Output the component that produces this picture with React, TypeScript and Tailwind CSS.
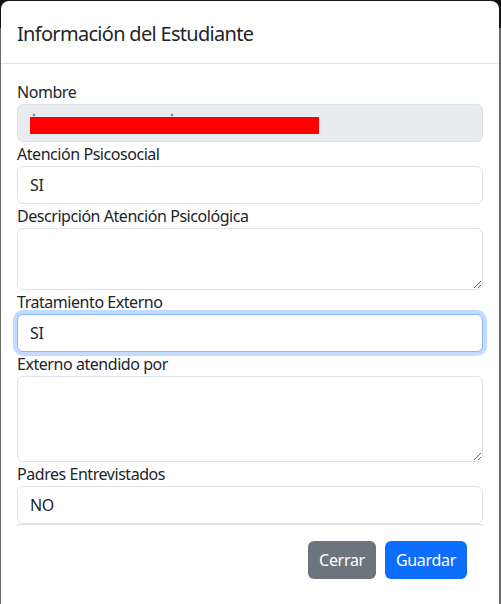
import React from "react";

const font = { fontFamily: '"Segoe UI", "Noto Sans", "Open Sans", sans-serif' };

function Label({ children }: { children: React.ReactNode }) {
  return (
    <label className="block h-[24px] text-[16px] leading-[24px] tracking-[-0.45px] text-[#212529]">{children}</label>
  );
}

function Input({ value, focused, disabled }: { value: string; focused?: boolean; disabled?: boolean }) {
  const base =
    "block w-full h-[38px] rounded-[6px] px-[12px] text-[16px] leading-[24px] tracking-[-0.3px] text-[#212529] outline-none border";
  const cls = focused
    ? `${base} border-[#86b7fe] bg-white shadow-[0_0_0_4px_rgba(13,110,253,0.25)]`
    : disabled
    ? `${base} border-[#dee2e6] bg-[#e9ecef]`
    : `${base} border-[#dee2e6] bg-white`;
  return <input className={cls} style={font} defaultValue={value} readOnly />;
}

function TextArea({ h }: { h: string }) {
  return (
    <textarea
      className={`block w-full ${h} rounded-[6px] border border-[#dee2e6] bg-white px-[12px] py-[6px] text-[16px] leading-[24px] text-[#212529] outline-none resize-y`}
      style={font}
      defaultValue=""
    />
  );
}

export default function App() {
  return (
    <div
      className="w-[501px] h-[604px] overflow-hidden pt-[1px] pl-[1px] bg-[linear-gradient(to_bottom,#141414_28px,#6b6b6b_28px)]"
      style={font}
    >
      <div className="w-[498px] h-[620px] bg-white rounded-t-[8px] flex flex-col">
        <div className="h-[63px] border-b border-[#dee2e6] px-[16px] pt-[3px] flex items-center">
          <h5 className="text-[20px] leading-[30px] tracking-[-0.7px] text-[#212529] font-normal">
            Información del Estudiante
          </h5>
        </div>
        <div className="px-[16px] pt-[16px]">
          <Label>Nombre</Label>
          <div className="relative">
            <Input value="" disabled />
            <div className="absolute left-[13px] top-[13px] w-[289px] h-[17px] bg-[#ff0000]" />
            <div className="absolute left-[16px] top-[10px] w-[2px] h-[2px] bg-[#777] rotate-45" />
            <div className="absolute left-[154px] top-[10px] w-[2px] h-[2px] bg-[#777] rotate-45" />
          </div>
          <Label>Atención Psicosocial</Label>
          <Input value="SI" />
          <Label>Descripción Atención Psicológica</Label>
          <TextArea h="h-[62px]" />
          <Label>Tratamiento Externo</Label>
          <Input value="SI" focused />
          <Label>Externo atendido por</Label>
          <TextArea h="h-[86px]" />
          <Label>Padres Entrevistados</Label>
          <Input value="NO" />
          <div className="h-[1px] bg-[#dee2e6]" />
        </div>
        <div className="flex justify-end gap-[9px] pt-[16px] pr-[32px]">
          <button
            className="h-[38px] w-[68px] rounded-[6px] bg-[#6c757d] text-white text-[16px] leading-[24px] tracking-[-0.3px]"
            style={font}
          >
            Cerrar
          </button>
          <button
            className="h-[38px] w-[82px] rounded-[6px] bg-[#0d6efd] text-white text-[16px] leading-[24px] tracking-[-0.3px]"
            style={font}
          >
            Guardar
          </button>
        </div>
      </div>
    </div>
  );
}
